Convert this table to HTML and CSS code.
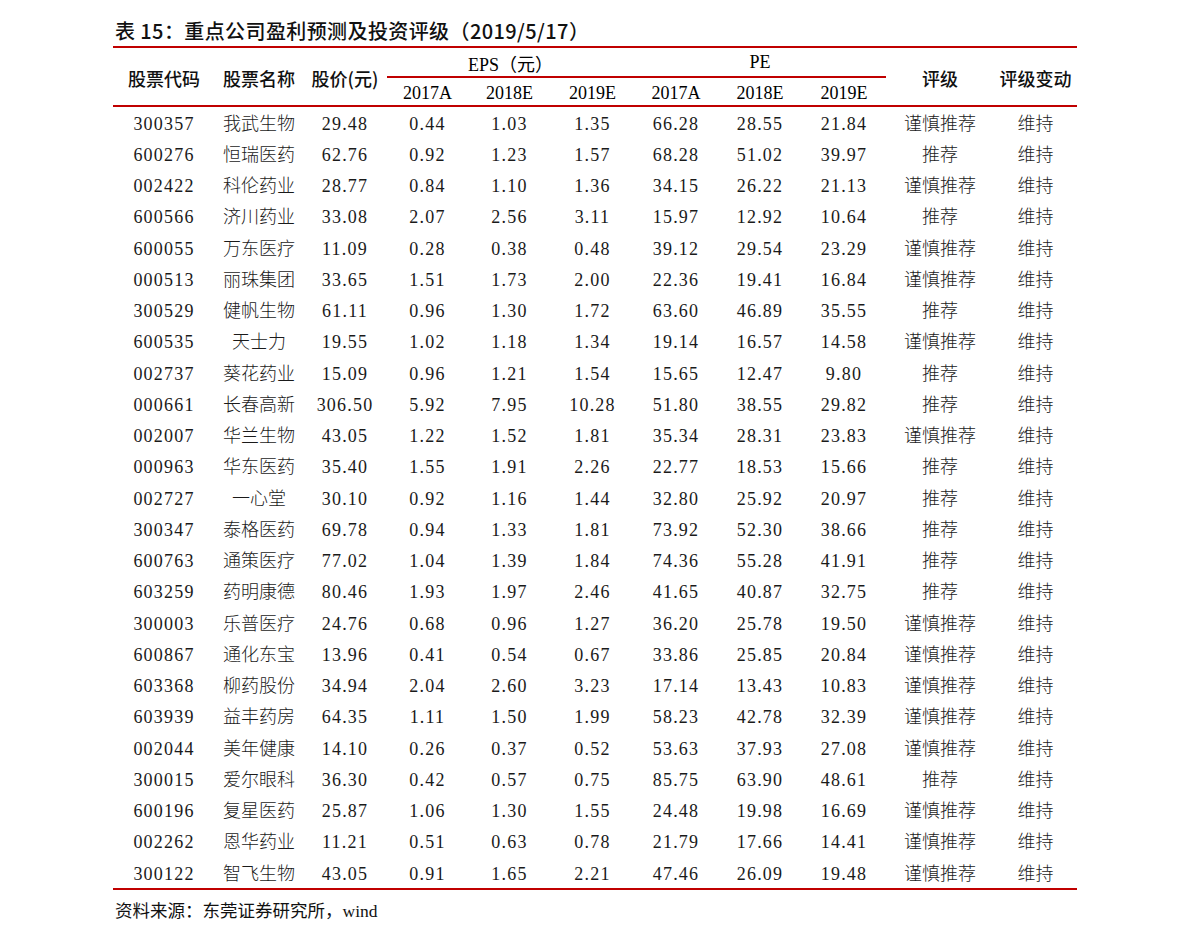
FILE: index.html
```html
<!DOCTYPE html>
<html lang="zh-CN">
<head>
<meta charset="utf-8">
<title>重点公司盈利预测及投资评级</title>
<link rel="stylesheet" href="styles.css">
</head>
<body>
<div class="page">
  <div class="title">表 15：重点公司盈利预测及投资评级（2019/5/17）</div>
  <div class="sheet">
    <div class="head">
      <div class="h hz c1">股票代码</div>
      <div class="h hz c2">股票名称</div>
      <div class="h hz c3">股价(元)</div>
      <div class="h grp g1">EPS（元）</div>
      <div class="h grp g2">PE</div>
      <div class="h hz c10">评级</div>
      <div class="h hz c11">评级变动</div>
      <div class="h yr">2017A</div>
      <div class="h yr">2018E</div>
      <div class="h yr">2019E</div>
      <div class="h yr">2017A</div>
      <div class="h yr">2018E</div>
      <div class="h yr">2019E</div>
    </div>
    <div class="body">
      <div class="row"><span>300357</span><span>我武生物</span><span>29.48</span><span>0.44</span><span>1.03</span><span>1.35</span><span>66.28</span><span>28.55</span><span>21.84</span><span>谨慎推荐</span><span>维持</span></div>
      <div class="row"><span>600276</span><span>恒瑞医药</span><span>62.76</span><span>0.92</span><span>1.23</span><span>1.57</span><span>68.28</span><span>51.02</span><span>39.97</span><span>推荐</span><span>维持</span></div>
      <div class="row"><span>002422</span><span>科伦药业</span><span>28.77</span><span>0.84</span><span>1.10</span><span>1.36</span><span>34.15</span><span>26.22</span><span>21.13</span><span>谨慎推荐</span><span>维持</span></div>
      <div class="row"><span>600566</span><span>济川药业</span><span>33.08</span><span>2.07</span><span>2.56</span><span>3.11</span><span>15.97</span><span>12.92</span><span>10.64</span><span>推荐</span><span>维持</span></div>
      <div class="row"><span>600055</span><span>万东医疗</span><span>11.09</span><span>0.28</span><span>0.38</span><span>0.48</span><span>39.12</span><span>29.54</span><span>23.29</span><span>谨慎推荐</span><span>维持</span></div>
      <div class="row"><span>000513</span><span>丽珠集团</span><span>33.65</span><span>1.51</span><span>1.73</span><span>2.00</span><span>22.36</span><span>19.41</span><span>16.84</span><span>谨慎推荐</span><span>维持</span></div>
      <div class="row"><span>300529</span><span>健帆生物</span><span>61.11</span><span>0.96</span><span>1.30</span><span>1.72</span><span>63.60</span><span>46.89</span><span>35.55</span><span>推荐</span><span>维持</span></div>
      <div class="row"><span>600535</span><span>天士力</span><span>19.55</span><span>1.02</span><span>1.18</span><span>1.34</span><span>19.14</span><span>16.57</span><span>14.58</span><span>谨慎推荐</span><span>维持</span></div>
      <div class="row"><span>002737</span><span>葵花药业</span><span>15.09</span><span>0.96</span><span>1.21</span><span>1.54</span><span>15.65</span><span>12.47</span><span>9.80</span><span>推荐</span><span>维持</span></div>
      <div class="row"><span>000661</span><span>长春高新</span><span>306.50</span><span>5.92</span><span>7.95</span><span>10.28</span><span>51.80</span><span>38.55</span><span>29.82</span><span>推荐</span><span>维持</span></div>
      <div class="row"><span>002007</span><span>华兰生物</span><span>43.05</span><span>1.22</span><span>1.52</span><span>1.81</span><span>35.34</span><span>28.31</span><span>23.83</span><span>谨慎推荐</span><span>维持</span></div>
      <div class="row"><span>000963</span><span>华东医药</span><span>35.40</span><span>1.55</span><span>1.91</span><span>2.26</span><span>22.77</span><span>18.53</span><span>15.66</span><span>推荐</span><span>维持</span></div>
      <div class="row"><span>002727</span><span>一心堂</span><span>30.10</span><span>0.92</span><span>1.16</span><span>1.44</span><span>32.80</span><span>25.92</span><span>20.97</span><span>推荐</span><span>维持</span></div>
      <div class="row"><span>300347</span><span>泰格医药</span><span>69.78</span><span>0.94</span><span>1.33</span><span>1.81</span><span>73.92</span><span>52.30</span><span>38.66</span><span>推荐</span><span>维持</span></div>
      <div class="row"><span>600763</span><span>通策医疗</span><span>77.02</span><span>1.04</span><span>1.39</span><span>1.84</span><span>74.36</span><span>55.28</span><span>41.91</span><span>推荐</span><span>维持</span></div>
      <div class="row"><span>603259</span><span>药明康德</span><span>80.46</span><span>1.93</span><span>1.97</span><span>2.46</span><span>41.65</span><span>40.87</span><span>32.75</span><span>推荐</span><span>维持</span></div>
      <div class="row"><span>300003</span><span>乐普医疗</span><span>24.76</span><span>0.68</span><span>0.96</span><span>1.27</span><span>36.20</span><span>25.78</span><span>19.50</span><span>谨慎推荐</span><span>维持</span></div>
      <div class="row"><span>600867</span><span>通化东宝</span><span>13.96</span><span>0.41</span><span>0.54</span><span>0.67</span><span>33.86</span><span>25.85</span><span>20.84</span><span>谨慎推荐</span><span>维持</span></div>
      <div class="row"><span>603368</span><span>柳药股份</span><span>34.94</span><span>2.04</span><span>2.60</span><span>3.23</span><span>17.14</span><span>13.43</span><span>10.83</span><span>谨慎推荐</span><span>维持</span></div>
      <div class="row"><span>603939</span><span>益丰药房</span><span>64.35</span><span>1.11</span><span>1.50</span><span>1.99</span><span>58.23</span><span>42.78</span><span>32.39</span><span>谨慎推荐</span><span>维持</span></div>
      <div class="row"><span>002044</span><span>美年健康</span><span>14.10</span><span>0.26</span><span>0.37</span><span>0.52</span><span>53.63</span><span>37.93</span><span>27.08</span><span>谨慎推荐</span><span>维持</span></div>
      <div class="row"><span>300015</span><span>爱尔眼科</span><span>36.30</span><span>0.42</span><span>0.57</span><span>0.75</span><span>85.75</span><span>63.90</span><span>48.61</span><span>推荐</span><span>维持</span></div>
      <div class="row"><span>600196</span><span>复星医药</span><span>25.87</span><span>1.06</span><span>1.30</span><span>1.55</span><span>24.48</span><span>19.98</span><span>16.69</span><span>谨慎推荐</span><span>维持</span></div>
      <div class="row"><span>002262</span><span>恩华药业</span><span>11.21</span><span>0.51</span><span>0.63</span><span>0.78</span><span>21.79</span><span>17.66</span><span>14.41</span><span>谨慎推荐</span><span>维持</span></div>
      <div class="row"><span>300122</span><span>智飞生物</span><span>43.05</span><span>0.91</span><span>1.65</span><span>2.21</span><span>47.46</span><span>26.09</span><span>19.48</span><span>谨慎推荐</span><span>维持</span></div>
    </div>
  </div>
  <div class="source">资料来源：东莞证券研究所，wind</div>
</div>
</body>
</html>
```

FILE: styles.css
```css
html, body {
  margin: 0;
  padding: 0;
  background: #ffffff;
}

.page {
  padding: 18px 0 0 113px;
  width: 964px;
  color: #111111;
}

.title {
  font-family: "Noto Sans CJK SC", "Noto Sans", sans-serif;
  font-weight: 500;
  font-size: 20px;
  line-height: 26px;
  height: 26px;
  margin-bottom: 2px;
  padding-left: 2px;
  letter-spacing: 0.4px;
  color: #111111;
}

.sheet {
  width: 964px;
}

.head {
  display: grid;
  grid-template-columns: 102px 88px 84px 81px 83px 83px 84px 84px 84px 108px 83px;
  grid-template-rows: 30px 27px;
  border-top: 2px solid #c00000;
  border-bottom: 2px solid #c00000;
}

.h {
  display: flex;
  align-items: center;
  justify-content: center;
  box-sizing: border-box;
}

.hz {
  grid-row: 1 / span 2;
  font-family: "Noto Sans CJK SC", sans-serif;
  font-weight: 500;
  font-size: 18px;
  padding-top: 2px;
}

.c1 { grid-column: 1; }
.c2 { grid-column: 2; }
.c3 { grid-column: 3; }
.c10 { grid-column: 10; }
.c11 { grid-column: 11; }

.grp {
  grid-row: 1;
  border-bottom: 2px solid #c00000;
  font-family: "Liberation Serif", "Noto Sans CJK SC", serif;
  font-size: 18px;
  padding-top: 1px;
  color: #000000;
}

.g1 { grid-column: 4 / span 3; }
.g2 { grid-column: 7 / span 3; }

.yr {
  grid-row: 2;
  font-family: "Liberation Serif", serif;
  font-size: 18px;
  padding-top: 3px;
  color: #000000;
}

.head .yr:nth-of-type(8) { grid-column: 4; }
.head .yr:nth-of-type(9) { grid-column: 5; }
.head .yr:nth-of-type(10) { grid-column: 6; }
.head .yr:nth-of-type(11) { grid-column: 7; }
.head .yr:nth-of-type(12) { grid-column: 8; }
.head .yr:nth-of-type(13) { grid-column: 9; }

.body {
  border-bottom: 2px solid #c00000;
}

.row {
  display: grid;
  grid-template-columns: 102px 88px 84px 81px 83px 83px 84px 84px 84px 108px 83px;
  height: 31.25px;
  align-items: center;
  font-family: "Liberation Serif", "Noto Sans CJK SC", serif;
  font-weight: 300;
  font-size: 18px;
  color: #1a1a1a;
}

.row span {
  text-align: center;
  letter-spacing: 1.2px;
  line-height: 20px;
  padding-top: 2px;
}

.row span:nth-child(2),
.row span:nth-child(10),
.row span:nth-child(11) {
  letter-spacing: 0;
}

.source {
  margin-top: 9px;
  font-family: "Liberation Serif", "Noto Sans CJK SC", serif;
  font-size: 17.5px;
  line-height: 24px;
  padding-left: 2px;
  color: #111111;
}
```
